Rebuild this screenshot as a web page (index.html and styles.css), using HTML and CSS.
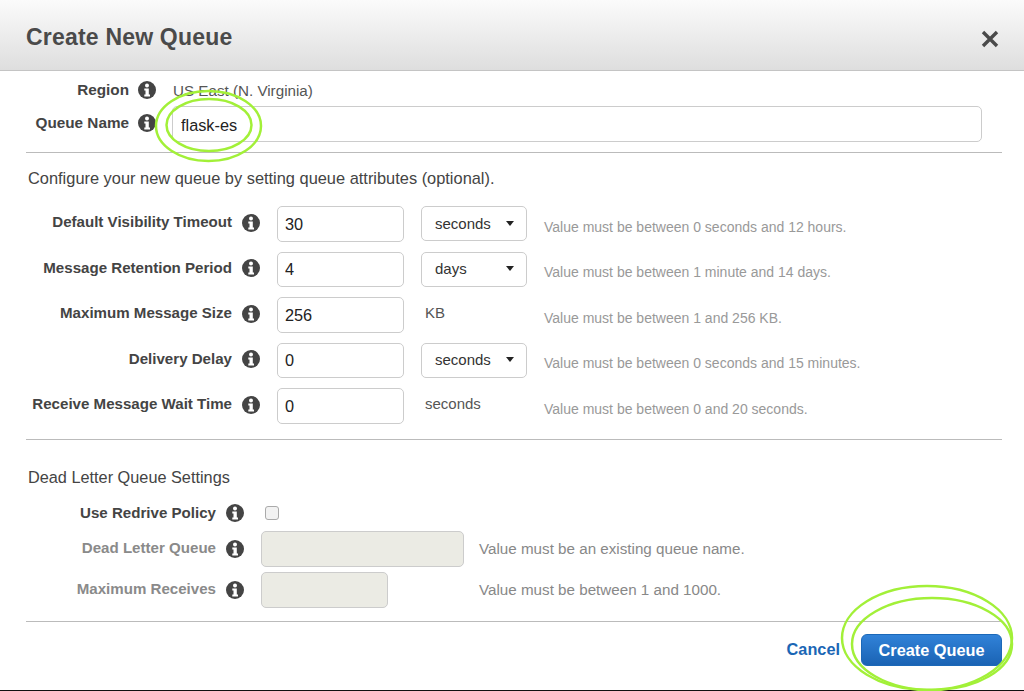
FILE: index.html
```html
<!DOCTYPE html>
<html lang="en">
<head>
    <meta charset="UTF-8">
    <meta name="viewport" content="width=device-width, initial-scale=1.0">
    <title>Create New Queue</title>
    <link rel="stylesheet" href="styles.css">
</head>
<body>
    <svg class="icon-defs" width="0" height="0">
        <symbol id="info" viewBox="0 0 18 18">
            <circle cx="9" cy="9" r="9" fill="#444"/>
            <circle cx="9" cy="4.6" r="2" fill="#fff"/>
            <path d="M6.3 7.6h4.5v6h1.2v2h-5.7v-2h1.2v-4h-1.2z" fill="#fff"/>
        </symbol>
    </svg>

    <div class="dialog">
        <div class="dialog-header">
            <h1>Create New Queue</h1>
            <svg class="close" width="18" height="18" viewBox="0 0 18 18"><path d="M2 2l14 14M16 2l-14 14" stroke="#4a4a4a" stroke-width="3.4" fill="none"/></svg>
        </div>

        <div class="dialog-body">
            <div class="top-form">
                <div class="top-row region-row">
                    <label>Region</label>
                    <svg class="info"><use href="#info"/></svg>
                    <span class="region-value">US East (N. Virginia)</span>
                </div>
                <div class="top-row">
                    <label>Queue Name</label>
                    <svg class="info"><use href="#info"/></svg>
                    <input type="text" class="name-input" value="flask-es">
                </div>
            </div>

            <hr class="rule rule-name">
            <p class="intro">Configure your new queue by setting queue attributes (optional).</p>

            <div class="attr-row">
                <label>Default Visibility Timeout</label>
                <svg class="info"><use href="#info"/></svg>
                <input type="text" class="attr-input" value="30">
                <div class="select">seconds<span class="caret"></span></div>
                <span class="hint">Value must be between 0 seconds and 12 hours.</span>
            </div>
            <div class="attr-row">
                <label>Message Retention Period</label>
                <svg class="info"><use href="#info"/></svg>
                <input type="text" class="attr-input" value="4">
                <div class="select">days<span class="caret"></span></div>
                <span class="hint">Value must be between 1 minute and 14 days.</span>
            </div>
            <div class="attr-row">
                <label>Maximum Message Size</label>
                <svg class="info"><use href="#info"/></svg>
                <input type="text" class="attr-input" value="256">
                <span class="unit">KB</span>
                <span class="hint">Value must be between 1 and 256 KB.</span>
            </div>
            <div class="attr-row">
                <label>Delivery Delay</label>
                <svg class="info"><use href="#info"/></svg>
                <input type="text" class="attr-input" value="0">
                <div class="select">seconds<span class="caret"></span></div>
                <span class="hint">Value must be between 0 seconds and 15 minutes.</span>
            </div>
            <div class="attr-row">
                <label>Receive Message Wait Time</label>
                <svg class="info"><use href="#info"/></svg>
                <input type="text" class="attr-input" value="0">
                <span class="unit">seconds</span>
                <span class="hint">Value must be between 0 and 20 seconds.</span>
            </div>

            <hr class="rule rule-attrs">
            <p class="section-title">Dead Letter Queue Settings</p>

            <div class="dlq-row dlq-check">
                <label>Use Redrive Policy</label>
                <svg class="info"><use href="#info"/></svg>
                <span class="checkbox"></span>
            </div>
            <div class="dlq-row">
                <label class="disabled">Dead Letter Queue</label>
                <svg class="info"><use href="#info"/></svg>
                <div class="dlq-input wide"></div>
                <span class="dlq-hint">Value must be an existing queue name.</span>
            </div>
            <div class="dlq-row">
                <label class="disabled">Maximum Receives</label>
                <svg class="info"><use href="#info"/></svg>
                <div class="dlq-input narrow"></div>
                <span class="dlq-hint">Value must be between 1 and 1000.</span>
            </div>

            <hr class="rule rule-dlq">
            <div class="dialog-footer">
                <a class="cancel">Cancel</a>
                <button class="primary">Create Queue</button>
            </div>
        </div>
    </div>

    <!-- hand drawn highlight circles on top of the dialog -->
    <svg class="marks" width="1024" height="691" viewBox="0 0 1024 691">
        <g fill="none" stroke="#a2f038" stroke-width="2.5">
            <ellipse cx="208.500" cy="126" rx="52.500" ry="35"/>
            <ellipse cx="209" cy="125" rx="42.500" ry="26"/>
            <ellipse cx="927" cy="638" rx="85" ry="52"/>
            <ellipse cx="932" cy="644" rx="80" ry="46"/>
        </g>
    </svg>
</body>
</html>
```

FILE: styles.css
```css
html, body { margin: 0; padding: 0; }
body {
    width: 1024px;
    height: 691px;
    overflow: hidden;
    background-color: #fff;
    font-family: "Liberation Sans", Arial, sans-serif;
    color: #444;
}
.icon-defs { display: block; height: 0; }

.dialog {
    height: 690px;
    border-bottom: 1px solid #111;
}
.dialog-header {
    height: 70px;
    display: flex;
    align-items: center;
    justify-content: space-between;
    padding: 0 25px 0 26px;
    border-bottom: 1px solid #c4c4c4;
    background: linear-gradient(to bottom, #fbfbfb, #dedede);
}
.dialog-header h1 {
    margin: 4px 0 0;
    font-size: 23px;
    font-weight: bold;
    letter-spacing: 0.2px;
    color: #4a4a4a;
}
.close { margin-top: 8px; }

.dialog-body { padding: 0 22px 0 26px; }
label {
    font-size: 15.1px;
    font-weight: bold;
    text-align: right;
    color: #444;
}
label.disabled { color: #8a8a8a; }
.info { width: 18px; height: 18px; flex: none; }

.top-row { display: flex; align-items: center; }
.top-row label { width: 103px; font-size: 15.3px; }
.top-row .info { margin: 0 0 0 9px; }
.region-row { height: 35px; padding-top: 3px; box-sizing: border-box; }
.region-value { margin-left: 17px; font-size: 15.2px; color: #555; }
.name-input {
    width: 810px;
    height: 36px;
    margin: 0 0 0 16px;
    padding: 2px 8px 0;
    box-sizing: border-box;
    border: 1px solid #ccc;
    border-radius: 5px;
    font: 16.3px "Liberation Sans", Arial, sans-serif;
    color: #222;
}
.top-form .top-row:last-child label { position: relative; top: -1px; }
.top-form .top-row:last-child .info { position: relative; top: -1px; }

.rule { margin: 0; border: 0; border-top: 1px solid #bbb; }
.rule-name { margin-top: 10px; }
.intro {
    margin: 16px 0 19px 2px;
    height: 18px;
    line-height: 18px;
    font-size: 16.4px;
    color: #444;
}

.attr-row {
    display: flex;
    align-items: center;
    height: 35.5px;
    margin-bottom: 10px;
}
.attr-row label { width: 206px; position: relative; top: -2px; }
.attr-row .info { margin-left: 10px; position: relative; top: -1px; }
.attr-input {
    width: 127px;
    height: 35.5px;
    margin-left: 17px;
    padding: 1px 7px 0;
    box-sizing: border-box;
    border: 1px solid #ccc;
    border-radius: 5px;
    font: 16.3px "Liberation Sans", Arial, sans-serif;
    color: #222;
}
.select {
    width: 106px;
    height: 35px;
    margin-left: 17px;
    padding: 0 13px 1px;
    box-sizing: border-box;
    display: flex;
    align-items: center;
    justify-content: space-between;
    border: 1px solid #ccc;
    border-radius: 5px;
    font-size: 15px;
    color: #333;
}
.caret {
    width: 0;
    height: 0;
    margin-right: -1px;
    border-left: 4.5px solid transparent;
    border-right: 4.5px solid transparent;
    border-top: 5px solid #222;
}
.unit {
    width: 106px;
    margin-left: 17px;
    padding-left: 4px;
    box-sizing: border-box;
    position: relative;
    top: -2px;
    font-size: 15px;
    color: #555;
}
.hint { margin-left: 17px; font-size: 14px; color: #999; position: relative; top: 3px; }

.rule-attrs { margin-top: 15px; }
.section-title {
    margin: 28px 0 0 2px;
    height: 18px;
    line-height: 18px;
    font-size: 16.3px;
    color: #444;
}

.dlq-row {
    display: flex;
    align-items: center;
    height: 36px;
    margin-bottom: 5px;
}
.dlq-check { height: 18px; margin-top: 18px; margin-bottom: 9px; }
.dlq-row label { width: 190px; position: relative; top: -1px; }
.dlq-check label { top: 0; }
.dlq-row .info { margin-left: 10px; }
.checkbox {
    width: 14px;
    height: 14px;
    margin-left: 21px;
    box-sizing: border-box;
    border: 1px solid #aaa;
    border-radius: 3px;
    background-color: #f2f2f2;
}
.dlq-input {
    height: 36px;
    margin-left: 17px;
    box-sizing: border-box;
    border: 1px solid #ccc;
    border-radius: 5px;
    background-color: #ebebe4;
}
.dlq-input.wide { width: 203px; }
.dlq-input.narrow { width: 127px; }
.dlq-hint { margin-left: 15px; font-size: 15.2px; color: #888; }
.dlq-input.narrow + .dlq-hint { margin-left: 91px; }

.rule-dlq { margin-top: 13px; }
.dialog-footer {
    display: flex;
    justify-content: flex-end;
    align-items: center;
    margin-top: 12px;
}
.cancel { font-size: 16.3px; font-weight: bold; color: #1a66b5; }
.primary {
    width: 141px;
    height: 32px;
    margin-left: 21px;
    padding: 1px 0 0;
    border: 1px solid #1b68b8;
    border-radius: 6px;
    background: linear-gradient(to bottom, #3182d8, #1a63b4);
    color: #fff;
    font: bold 16.3px "Liberation Sans", Arial, sans-serif;
}

.marks { position: absolute; left: 0; top: 0; pointer-events: none; }
```
